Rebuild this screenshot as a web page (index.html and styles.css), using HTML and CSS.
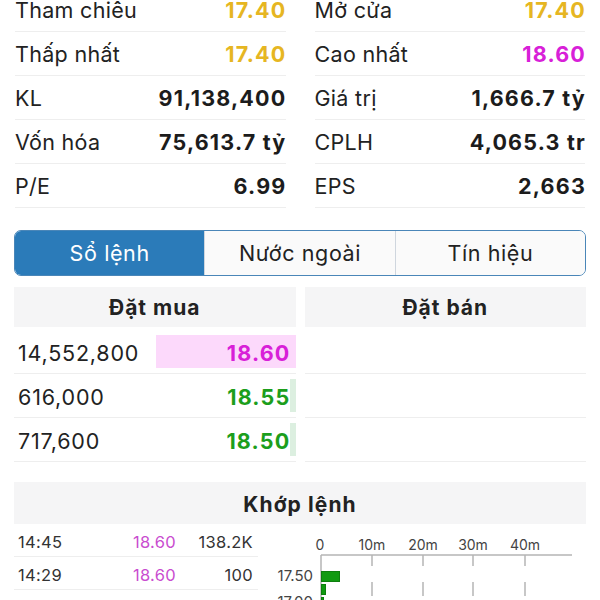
FILE: index.html
```html
<!DOCTYPE html>
<html lang="vi">
<head>
  <meta charset="UTF-8" />
  <title>Chi tiết mã</title>
  <link rel="stylesheet" href="styles.css">
</head>
<body>
  <div id="stats">
    <div class="stat"><span>Tham chiêu</span><b class="ref">17.40</b></div>
    <div class="stat"><span>Mở cửa</span><b class="ref">17.40</b></div>
    <div class="stat"><span>Thấp nhất</span><b class="ref">17.40</b></div>
    <div class="stat"><span>Cao nhất</span><b class="ceil">18.60</b></div>
    <div class="stat"><span>KL</span><b>91,138,400</b></div>
    <div class="stat"><span>Giá trị</span><b>1,666.7 tỷ</b></div>
    <div class="stat"><span>Vốn hóa</span><b>75,613.7 tỷ</b></div>
    <div class="stat"><span>CPLH</span><b>4,065.3 tr</b></div>
    <div class="stat"><span>P/E</span><b>6.99</b></div>
    <div class="stat"><span>EPS</span><b>2,663</b></div>
  </div>

  <div id="tabs">
    <div class="tab active">Sổ lệnh</div>
    <div class="tab">Nước ngoài</div>
    <div class="tab">Tín hiệu</div>
  </div>

  <div id="book">
    <div class="side">
      <div class="side-head">Đặt mua</div>
      <div class="order">
        <div class="bar pink" style="width: 140px"></div>
        <span class="vol">14,552,800</span><b class="ceil">18.60</b>
      </div>
      <div class="order">
        <div class="bar green" style="width: 6px"></div>
        <span class="vol">616,000</span><b class="up">18.55</b>
      </div>
      <div class="order">
        <div class="bar green" style="width: 6px"></div>
        <span class="vol">717,600</span><b class="up">18.50</b>
      </div>
    </div>
    <div class="side">
      <div class="side-head">Đặt bán</div>
      <div class="order"></div>
      <div class="order"></div>
      <div class="order"></div>
    </div>
  </div>

  <div id="match-head">Khớp lệnh</div>
  <div id="match">
    <div id="trades">
      <div class="trade"><span class="t">14:45</span><span class="p">18.60</span><span class="v">138.2K</span></div>
      <div class="trade"><span class="t">14:29</span><span class="p">18.60</span><span class="v">100</span></div>
    </div>
    <svg id="chart" width="327" height="80" viewBox="0 0 327 80">
      <g class="axis-label" text-anchor="middle">
        <text x="62" y="26">0</text>
        <text x="114" y="26">10m</text>
        <text x="165" y="26">20m</text>
        <text x="215" y="26">30m</text>
        <text x="267" y="26">40m</text>
      </g>
      <line class="axis" x1="63" y1="31" x2="314" y2="31" />
      <line class="axis" x1="63" y1="31" x2="63" y2="80" />
      <g class="tick">
        <line x1="114" y1="31" x2="114" y2="42" />
        <line x1="165" y1="31" x2="165" y2="42" />
        <line x1="215" y1="31" x2="215" y2="42" />
        <line x1="267" y1="31" x2="267" y2="42" />
        <line x1="114" y1="58" x2="114" y2="72" />
        <line x1="165" y1="58" x2="165" y2="72" />
        <line x1="215" y1="58" x2="215" y2="72" />
        <line x1="267" y1="58" x2="267" y2="72" />
      </g>
      <g class="price-label" text-anchor="end">
        <text x="55" y="57">17.50</text>
        <text x="55" y="83">17.00</text>
      </g>
      <rect class="vbar" x="63.5" y="47.5" width="18" height="10" />
      <rect class="vbar" x="63.5" y="60.5" width="4" height="10" />
      <rect class="vbar" x="63.5" y="73.5" width="2" height="10" />
    </svg>
  </div>
</body>
</html>
```

FILE: styles.css
```css
body {
  font-family: Inter, "Noto Sans", sans-serif;
  color: #222;
  background: #fff;
  margin: 0;
  padding: 0 15px;
  height: 600px;
  overflow: hidden;
}
#stats {
  display: grid;
  grid-template-columns: 1fr 1fr;
  column-gap: 29px;
  margin-top: -12px;
}
.stat {
  display: flex;
  justify-content: space-between;
  align-items: center;
  height: 43px;
  border-bottom: 1px solid #eeeeee;
  font-size: 21.5px;
  letter-spacing: 0.3px;
}
.stat b {
  font-weight: 700;
  color: #1c1c1c;
  letter-spacing: 1.2px;
  margin-right: -1px;
}
.stat b.ref {
  color: #e6b622;
}
b.ceil {
  color: #d820d8;
}
b.up {
  color: #1c9e1c;
}
#tabs {
  display: flex;
  margin: 22px -1px 0;
  border: 1px solid #4a86b8;
  border-radius: 7px;
  overflow: hidden;
  height: 44px;
}
.tab {
  flex: 1;
  display: flex;
  align-items: center;
  justify-content: center;
  font-size: 21.5px;
  letter-spacing: 0.6px;
  color: #222;
  background: #fafafa;
  border-left: 1px solid #cfd6de;
}
.tab:first-child {
  border-left: none;
}
.tab.active {
  background: #2b7bb9;
  color: #fff;
}
#book {
  display: grid;
  grid-template-columns: 1fr 1fr;
  column-gap: 9px;
  margin: 11px -1px 0;
}
.side-head {
  height: 40px;
  display: flex;
  align-items: center;
  justify-content: center;
  background: #f5f5f6;
  font-weight: 700;
  font-size: 21px;
  letter-spacing: 1px;
  margin-bottom: 3px;
}
.order {
  position: relative;
  display: flex;
  justify-content: space-between;
  align-items: center;
  height: 44px;
  padding-top: 2px;
  box-sizing: border-box;
  border-bottom: 1px solid #eeeeee;
  font-size: 21.5px;
}
.order .vol {
  position: relative;
  padding-left: 4px;
  letter-spacing: 0.8px;
}
.order b {
  position: relative;
  padding-right: 5px;
  font-weight: 700;
  letter-spacing: 1.2px;
}
.bar {
  position: absolute;
  right: 0;
  top: 5px;
  bottom: 5px;
}
.bar.pink {
  background: #fcd9fb;
}
.bar.green {
  background: #dcefe0;
}
#match-head {
  margin: 20px -1px 0;
  height: 42px;
  padding-top: 2px;
  box-sizing: border-box;
  display: flex;
  align-items: center;
  justify-content: center;
  background: #f5f5f6;
  font-weight: 700;
  font-size: 21px;
  letter-spacing: 1.1px;
}
#match {
  display: flex;
  margin: 0 -1px;
}
#trades {
  width: 244px;
  flex: none;
}
.trade {
  display: flex;
  align-items: center;
  height: 33px;
  padding-top: 3px;
  box-sizing: border-box;
  border-bottom: 1px solid #eeeeee;
  font-size: 16.5px;
  letter-spacing: 0.3px;
  color: #333;
}
.trade .t {
  width: 96px;
  padding-left: 4px;
}
.trade .p {
  width: 62px;
  text-align: right;
  color: #c94ccf;
}
.trade .v {
  flex: 1;
  text-align: right;
  padding-right: 5px;
}
#chart {
  display: block;
  flex: none;
}
.axis-label,
.price-label {
  font-family: Inter, "Noto Sans", sans-serif;
  font-size: 14px;
  fill: #444;
}
.price-label {
  font-size: 15px;
}
.axis {
  stroke: #b5b5b5;
  stroke-width: 1.5;
}
.tick line {
  stroke: #b5b5b5;
  stroke-width: 1.5;
}
.vbar {
  fill: #119a11;
  stroke: #0e7e0e;
  stroke-width: 1;
}
```
